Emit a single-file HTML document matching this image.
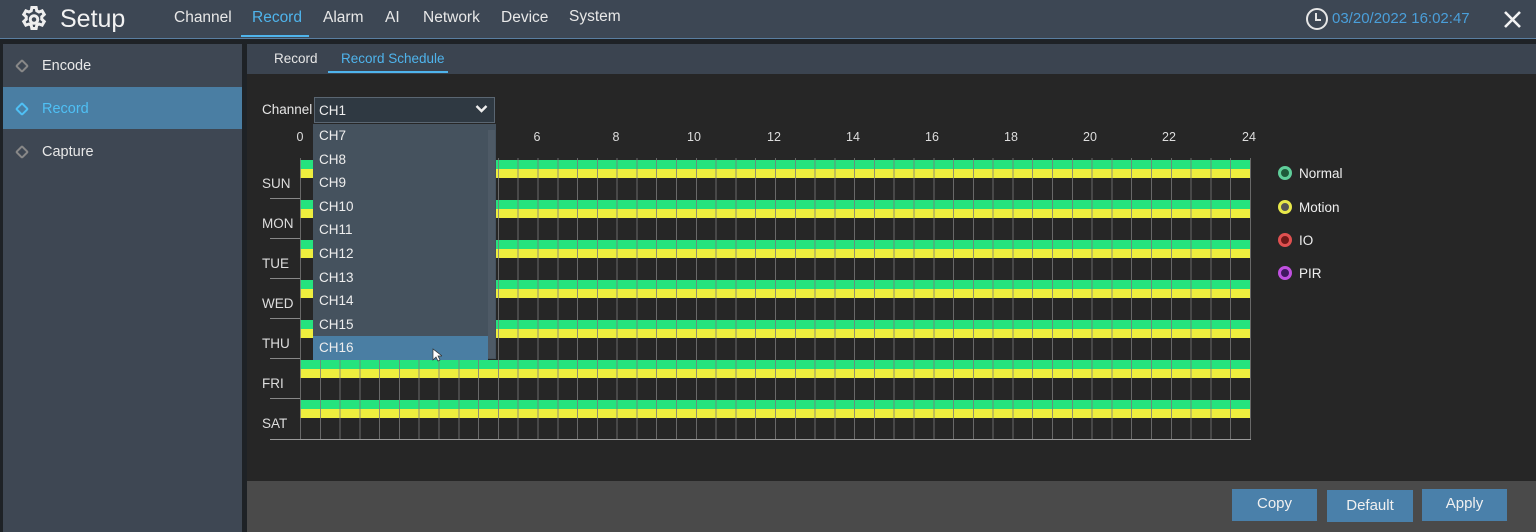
<!DOCTYPE html>
<html><head><meta charset="utf-8"><style>
*{margin:0;padding:0;box-sizing:border-box}
body{width:1536px;height:532px;background:#1e2226;font-family:"Liberation Sans",sans-serif;position:relative;overflow:hidden;color:#e6e6e6}
.a{position:absolute}
#top{left:0;top:0;width:1536px;height:38px;background:#3d4754}
.nav{top:9px;font-size:15.5px;color:#e8e8e8}
#side{left:3px;top:44px;width:239px;height:488px;background:#3e4753}
.si{left:0;width:239px;height:42px;font-size:14.5px;line-height:44px;padding-left:39px;color:#e8e8e8}
#sub{left:247px;top:44px;width:1289px;height:30px;background:#3b4450}
#cont{left:247px;top:74px;width:1289px;height:407px;background:#262626}
#foot{left:247px;top:481px;width:1289px;height:51px;background:#4a4a4a}
.btn{top:489px;width:85px;height:32px;background:#4a80aa;color:#f0f0f0;font-size:15px;text-align:center;line-height:30px}
.hr{top:130px;font-size:12.5px;color:#ddd;width:30px;text-align:center}
.day{left:262px;font-size:13.5px;color:#ddd}
.row{left:300px;width:950px;height:40px}
.g{left:0;top:2px;width:950px;height:9px;background:#25e37e}
.y{left:0;top:11px;width:950px;height:9px;background:#eeee3e}
.lines{left:300px;top:158px;width:951px;height:282px;background:repeating-linear-gradient(90deg,#7a7a7a 0 1px,transparent 1px 19.79px)}
.dd{left:313px;width:175px;height:23.6px;font-size:13.5px;line-height:23px;padding-left:6px;color:#eee}
.lg{left:1278px;font-size:13.5px;color:#eee}
.dot{display:inline-block;width:14px;height:14px;border-radius:50%;border:3px solid;vertical-align:-2px;margin-right:7px}
.bul{width:10px;height:10px;transform:rotate(45deg);border:2px solid #888;border-radius:2px}
</style></head><body>
<div id="top" class="a"></div>
<svg class="a" style="left:19px;top:5px" width="30" height="30" viewBox="0 0 24 24" fill="none" stroke="#eee" stroke-width="2.4"><path d="M10.3 2h3.4l.5 2.6 1.8 1 2.5-.9 1.7 2.9-2 1.8v2l2 1.8-1.7 2.9-2.5-.9-1.8 1-.5 2.6h-3.4l-.5-2.6-1.8-1-2.5.9-1.7-2.9 2-1.8v-2l-2-1.8 1.7-2.9 2.5.9 1.8-1z"/><circle cx="12" cy="11.6" r="3"/></svg>
<div class="a" style="left:60px;top:5px;font-size:25px;color:#f2f2f2">Setup</div>
<div class="a nav" style="left:174px">Channel</div>
<div class="a nav" style="left:252px;color:#4fb4ec">Record</div>
<div class="a" style="left:241px;top:35px;width:68px;height:2px;background:#4fb4ec"></div>
<div class="a nav" style="left:323px">Alarm</div>
<div class="a nav" style="left:385px">AI</div>
<div class="a nav" style="left:423px">Network</div>
<div class="a nav" style="left:501px">Device</div>
<div class="a nav" style="left:569px;top:8px">System</div>
<svg class="a" style="left:1305px;top:7px" width="24" height="24" viewBox="0 0 24 24" fill="none" stroke="#e6e6e6" stroke-width="2"><circle cx="12" cy="12" r="10"/><path d="M11 6v7h5"/></svg>
<div class="a" style="left:1332px;top:10px;font-size:15px;color:#4a9fda">03/20/2022 16:02:47</div>
<svg class="a" style="left:1503px;top:10px" width="19" height="19" viewBox="0 0 19 19" stroke="#f2f2f2" stroke-width="2.6"><path d="M2 2L17 17M17 2L2 17"/></svg>
<div class="a" style="left:0;top:38px;width:1536px;height:1px;background:#5a7ea0"></div>

<div id="side" class="a"></div>
<div class="a si" style="left:3px;top:44px">Encode</div>
<div class="a si" style="left:3px;top:87px;background:#4a7ea3;color:#4fc0f5">Record</div>
<div class="a si" style="left:3px;top:130px">Capture</div>
<div class="a bul" style="left:17px;top:61px"></div>
<div class="a bul" style="left:17px;top:104px;border-color:#4fc0f5"></div>
<div class="a bul" style="left:17px;top:147px"></div>

<div id="sub" class="a"></div>
<div class="a" style="left:274px;top:51px;font-size:13.5px;color:#e6e6e6">Record</div>
<div class="a" style="left:341px;top:51px;font-size:13.5px;color:#4fb4ec">Record Schedule</div>
<div class="a" style="left:328px;top:71px;width:120px;height:2px;background:#4fb4ec"></div>

<div id="cont" class="a"></div>
<div class="a" style="left:262px;top:102px;font-size:13.5px">Channel</div>
<div class="a" style="left:314px;top:97px;width:181px;height:26px;background:#2f3942;border:1px solid #5a6672;font-size:13.5px;padding:5px 4px;color:#eee">CH1</div>
<svg class="a" style="left:475px;top:104px" width="13" height="10" viewBox="0 0 13 10" fill="none" stroke="#eee" stroke-width="2.4"><path d="M1.5 2l5 5 5-5"/></svg>

<div class="a hr" style="left:285px">0</div>
<div class="a hr" style="left:522px">6</div><div class="a hr" style="left:601px">8</div><div class="a hr" style="left:679px">10</div><div class="a hr" style="left:759px">12</div><div class="a hr" style="left:838px">14</div><div class="a hr" style="left:917px">16</div><div class="a hr" style="left:996px">18</div><div class="a hr" style="left:1075px">20</div><div class="a hr" style="left:1154px">22</div><div class="a hr" style="left:1234px">24</div>

<div class="a" style="left:300px;top:158px;width:950px;height:282px;background:#262626"></div>
<div class="a row" style="top:158px"><div class="a g"></div><div class="a y"></div></div>
<div class="a row" style="top:198px"><div class="a g"></div><div class="a y"></div></div>
<div class="a row" style="top:238px"><div class="a g"></div><div class="a y"></div></div>
<div class="a row" style="top:278px"><div class="a g"></div><div class="a y"></div></div>
<div class="a row" style="top:318px"><div class="a g"></div><div class="a y"></div></div>
<div class="a row" style="top:358px"><div class="a g"></div><div class="a y"></div></div>
<div class="a row" style="top:398px"><div class="a g"></div><div class="a y"></div></div>
<div class="a lines" style="opacity:.8"></div>
<div class="a" style="left:270px;top:198px;width:30px;height:1px;background:#888"></div>
<div class="a" style="left:270px;top:238px;width:30px;height:1px;background:#888"></div>
<div class="a" style="left:270px;top:278px;width:30px;height:1px;background:#888"></div>
<div class="a" style="left:270px;top:318px;width:30px;height:1px;background:#888"></div>
<div class="a" style="left:270px;top:358px;width:30px;height:1px;background:#888"></div>
<div class="a" style="left:270px;top:398px;width:30px;height:1px;background:#888"></div>
<div class="a" style="left:270px;top:439px;width:981px;height:1px;background:#999"></div>
<div class="a day" style="top:176px">SUN</div>
<div class="a day" style="top:216px">MON</div>
<div class="a day" style="top:256px">TUE</div>
<div class="a day" style="top:296px">WED</div>
<div class="a day" style="top:336px">THU</div>
<div class="a day" style="top:376px">FRI</div>
<div class="a day" style="top:416px">SAT</div>

<div class="a" style="left:313px;top:124px;width:183px;height:235px;background:#45525e"></div>
<div class="a" style="left:488px;top:130px;width:7px;height:228px;background:#4e5a66"></div>
<div class="a dd" style="top:124px">CH7</div>
<div class="a dd" style="top:147.6px">CH8</div>
<div class="a dd" style="top:171.2px">CH9</div>
<div class="a dd" style="top:194.8px">CH10</div>
<div class="a dd" style="top:218.4px">CH11</div>
<div class="a dd" style="top:242px">CH12</div>
<div class="a dd" style="top:265.6px">CH13</div>
<div class="a dd" style="top:289.2px">CH14</div>
<div class="a dd" style="top:312.8px">CH15</div>
<div class="a dd" style="top:336px;background:#4a7ea3">CH16</div>
<svg class="a" style="left:432px;top:348px" width="10" height="14" viewBox="0 0 10 14"><path d="M1 1v11l3-3 2 4 2-1-2-4h4z" fill="#fff" stroke="#333" stroke-width=".7"/></svg>

<div class="a lg" style="top:166px"><span class="dot" style="border-color:#5fce9a;background:#1e5a3a"></span>Normal</div>
<div class="a lg" style="top:200px"><span class="dot" style="border-color:#e8e84a;background:#555"></span>Motion</div>
<div class="a lg" style="top:233px"><span class="dot" style="border-color:#e05050;background:#701818"></span>IO</div>
<div class="a lg" style="top:266px"><span class="dot" style="border-color:#c050e0;background:#401860"></span>PIR</div>

<div id="foot" class="a"></div>
<div class="a btn" style="left:1232px">Copy</div>
<div class="a btn" style="left:1327px;top:490px;width:86px;line-height:32px">Default</div>
<div class="a btn" style="left:1422px">Apply</div>
</body></html>
